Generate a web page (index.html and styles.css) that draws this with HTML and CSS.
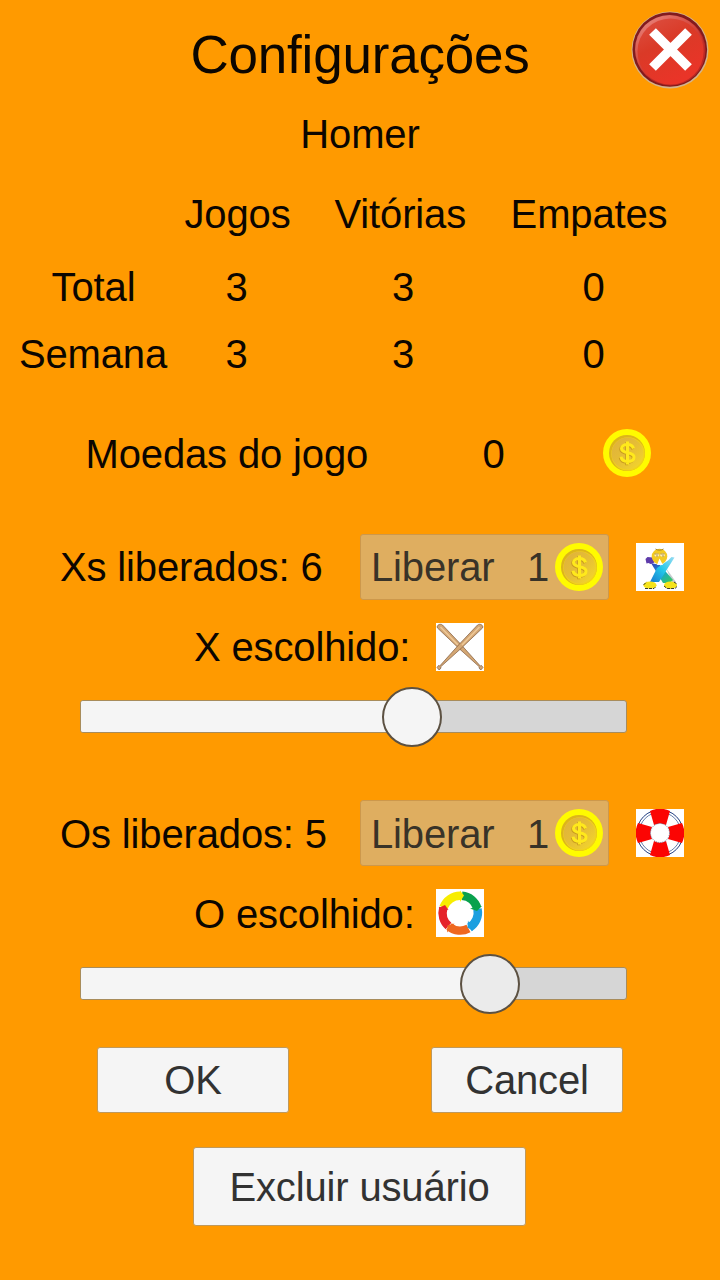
FILE: index.html
```html
<!DOCTYPE html>
<html lang="pt-BR">
<head>
<meta charset="utf-8">
<title>Configurações</title>
<link rel="stylesheet" href="styles.css">
</head>
<body>
<svg class="defs" aria-hidden="true">
  <defs>
    <linearGradient id="face" x1="0" y1="0" x2="1" y2="1"><stop offset="0" stop-color="#deb03c"/><stop offset=".5" stop-color="#e6be35"/><stop offset="1" stop-color="#f5d92a"/></linearGradient>
    <symbol id="coin" viewBox="0 0 48 48">
      <circle cx="24" cy="24" r="24" fill="#fffb00"/>
      <circle cx="24" cy="24" r="18" fill="#dcb41c"/>
      <circle cx="25" cy="25" r="16.800" fill="#f2d21a"/>
      <circle cx="24.5" cy="24.500" r="16" fill="url(#face)"/>
      <g fill="none" stroke-width="3">
        <path d="M30.500 19.500c-.8-2.700-3-4-6-4s-6 1.300-6 4c0 5.800 12.500 2.700 12.500 8.500 0 3-2.800 4.500-6.500 4.500s-6-1.600-6.500-4.700M24.500 12.500v23" stroke="#c99c20" transform="translate(-.8 .8)"/>
        <path d="M30.500 19.500c-.8-2.700-3-4-6-4s-6 1.300-6 4c0 5.800 12.500 2.700 12.500 8.500 0 3-2.800 4.500-6.500 4.500s-6-1.600-6.500-4.700M24.500 12.500v23" stroke="#ffe91c"/>
      </g>
    </symbol>
  </defs>
</svg>
<main class="screen">
  <header class="title-row">
    <h1 class="title">Configurações</h1>
    <button class="close" aria-label="Fechar">
      <svg viewBox="0 0 78 78" width="78" height="78">
        <defs>
          <linearGradient id="red" x1="0" y1="0" x2=".5" y2="1"><stop offset="0" stop-color="#dc5143"/><stop offset=".45" stop-color="#da3a27"/><stop offset="1" stop-color="#ea3428"/></linearGradient>
          <linearGradient id="shine" x1="0" y1="0" x2=".7" y2="1"><stop offset="0" stop-color="#f19b92"/><stop offset=".6" stop-color="#e35345" stop-opacity=".5"/><stop offset="1" stop-color="#e2382b" stop-opacity="0"/></linearGradient>
        </defs>
        <circle cx="39" cy="39" r="38.500" fill="#d3b48c"/>
        <circle cx="38.800" cy="38.500" r="37.300" fill="#821a1d"/>
        <circle cx="39.500" cy="39.500" r="35" fill="#bd2823"/>
        <circle cx="38.500" cy="38.500" r="34.500" fill="url(#shine)"/>
        <circle cx="39.500" cy="40.500" r="33" fill="url(#red)"/>
        <path d="M21.500 20.500l36 36M57.500 20.500L21.500 56.500" stroke="#fff" stroke-width="9.500"/>
      </svg>
    </button>
  </header>
  <div class="player">Homer</div>

  <section class="stats">
    <div class="stats-head"><span>Jogos</span><span>Vitórias</span><span>Empates</span></div>
    <div class="stats-row"><span>Total</span><span>3</span><span>3</span><span>0</span></div>
    <div class="stats-row"><span>Semana</span><span>3</span><span>3</span><span>0</span></div>
  </section>

  <div class="coins">
    <span class="coins-label">Moedas do jogo</span>
    <span class="coins-value">0</span>
    <svg class="icon"><use href="#coin"/></svg>
  </div>

  <section class="piece">
    <div class="unlock-row">
      <span class="unlocked">Xs liberados: 6</span>
      <button class="unlock" disabled><span>Liberar</span><span class="price">1</span><svg class="icon"><use href="#coin"/></svg></button>
      <svg class="icon" viewBox="0 0 48 48">
        <defs>
          <linearGradient id="body" x1="1" y1="0" x2="0" y2="1"><stop offset="0" stop-color="#9bdcf2"/><stop offset=".5" stop-color="#22c8ea"/><stop offset="1" stop-color="#1779cf"/></linearGradient>
          <linearGradient id="leg" x1="0" y1="0" x2="1" y2="1"><stop offset="0" stop-color="#3835b5"/><stop offset=".45" stop-color="#12a2dc"/><stop offset="1" stop-color="#3cce4b"/></linearGradient>
        </defs>
        <path fill="#fff" d="M0 0h48v48H0z"/>
        <path d="M37 41l3-2-10-14z" fill="#c4cbce"/>
        <path d="M9.500 16l2-2 5 .5 2 5-4 1.500-2-1-2 .5z" fill="#5e3baa"/>
        <path d="M15 20l9 2 13 15-3 3h-7z" fill="url(#leg)"/>
        <path d="M32 17.500l3.500-3.500 3 .5L23 39h-9l7-14z" fill="url(#body)"/>
        <circle cx="23.500" cy="13.500" r="7.800" fill="#f3ca22"/>
        <path d="M19.500 6c2 1.500 6 1.500 8 0" stroke="#a5862a" fill="none"/>
        <ellipse cx="20.800" cy="12" rx="2.500" ry="1.800" fill="#fff0b4"/>
        <ellipse cx="26.500" cy="12" rx="2.500" ry="1.800" fill="#fff0b4"/>
        <path d="M18.500 11h4M24.500 11h4M20 13h2M26 13h2" stroke="#8a6c22" stroke-width=".7"/>
        <path d="M21 22l2.500-6.500L27 22z" fill="#fff"/>
        <ellipse cx="14" cy="42.200" rx="6.500" ry="3.700" fill="#f5e31b"/>
        <ellipse cx="34.500" cy="42.200" rx="6.500" ry="3.700" fill="#f5e31b"/>
        <path d="M7.500 42l3-3M9 45.500h9l2-2M28 43l3 2.500h8l2-2M38 39l3 2" fill="none" stroke="#292817" stroke-width=".9" stroke-dasharray="3 1"/>
      </svg>
    </div>
    <div class="chosen">
      <span class="chosen-label">X escolhido:</span>
      <svg class="icon" viewBox="0 0 48 48">
        <defs>
          <g id="bat">
            <path d="M1.500 5C0 2.500 4 0 6.500 2L25 21.500 44.300 43l1.200-.5 1.500 2-2.200 2.500-1.800-2 .3-1.200L22.500 25z" fill="#d3a673" stroke="#805a3c" stroke-width=".7"/>
            <path d="M4.500 4L22 22" fill="none" stroke="#efc998" stroke-width="1.600"/>
          </g>
        </defs>
        <path fill="#fff" d="M0 0h48v48H0z"/>
        <use href="#bat"/>
        <use href="#bat" transform="translate(48 0) scale(-1 1)"/>
      </svg>
    </div>
    <div class="slider"><div class="fill" style="width:331px"></div><div class="thumb"></div></div>
  </section>

  <section class="piece">
    <div class="unlock-row">
      <span class="unlocked">Os liberados: 5</span>
      <button class="unlock" disabled><span>Liberar</span><span class="price">1</span><svg class="icon"><use href="#coin"/></svg></button>
      <svg class="icon" viewBox="0 0 48 48">
        <path fill="#fff" d="M0 0h48v48H0z"/>
        <circle cx="24" cy="24" r="23.200" fill="none" stroke="#1f3c80" stroke-width="1"/>
        <circle cx="24" cy="24" r="20.800" fill="none" stroke="#3c5994" stroke-width=".8"/>
        <path d="M14 2c6-3 14-3 20 0l-4 14c-4-2-8-2-12 0zM46 14c3 6 3 14 0 20l-14-4c2-4 2-8 0-12zM34 46c-6 3-14 3-20 0l4-14c4 2 8 2 12 0zM2 34c-3-6-3-14 0-20l14 4c-2 4-2 8 0 12z" fill="#fb0503"/>
        <circle cx="24" cy="24" r="9.500" fill="#fff" stroke="#53658c" stroke-width=".8" stroke-dasharray="1 1"/>
      </svg>
    </div>
    <div class="chosen">
      <span class="chosen-label">O escolhido:</span>
      <svg class="icon" viewBox="0 0 48 48">
        <path fill="#fff" d="M0 0h48v48H0z"/>
        <g fill="none" stroke-width="8.500">
          <path d="M26 6.800A17.500 17.500 0 0 1 41.200 19" stroke="#09a14d"/>
          <path d="M41.500 20A17.500 17.500 0 0 1 33.500 38.500" stroke="#1b9fe0"/>
          <path d="M32.500 39.500A17.500 17.500 0 0 1 13 37.500" stroke="#ef6820"/>
          <path d="M12.500 37A17.500 17.500 0 0 1 7.300 19" stroke="#e5232a"/>
          <path d="M7.500 18.500A17.500 17.500 0 0 1 24.500 6.800" stroke="#f8ed00"/>
        </g>
        <path d="M24 1.500l4 5-4 6.500z" fill="#f8ed00"/>
        <path d="M46 17l-5 5-7-2.500z" fill="#09a14d"/>
        <path d="M37 42l-5.500-3.500.5-7z" fill="#1b9fe0"/>
        <path d="M11 43.500l.5-7 7-2z" fill="#ef6820"/>
        <path d="M2.500 19l6.500-3 3.500 5z" fill="#e5232a"/>
      </svg>
    </div>
    <div class="slider"><div class="fill" style="width:409px"></div><div class="thumb thumb-active"></div></div>
  </section>

  <div class="actions">
    <button class="btn">OK</button>
    <button class="btn">Cancel</button>
  </div>
  <button class="btn btn-delete">Excluir usuário</button>
</main>
</body>
</html>
```
FILE: styles.css
```css
* { box-sizing: border-box; }
body { margin: 0; background: #ff9a00; }
.defs { position: absolute; width: 0; height: 0; }
.screen {
  width: 720px;
  height: 1280px;
  overflow: hidden;
  display: flex;
  flex-direction: column;
  font: 40px/1 "Liberation Sans", Arial, sans-serif;
  letter-spacing: -.14px;
  color: #0c0600;
}
button { margin: 0; padding: 0; border: 0; background: none; font: inherit; letter-spacing: inherit; }
.icon { display: block; flex: none; width: 48px; height: 48px; }
.title-row {
  height: 108px;
  flex: none;
  display: grid;
  grid-template-columns: 89px 1fr 89px;
  align-items: center;
}
.title { grid-column: 2; margin: 0; padding-top: 1px; font-size: 53px; font-weight: 400; text-align: center; white-space: nowrap; letter-spacing: -.2px; }
.close { grid-column: 3; align-self: start; width: 78px; height: 78px; margin-top: 11px; }
.close svg { display: block; }
.player { height: 52px; flex: none; line-height: 52px; text-align: center; }
.stats { margin-top: 21px; flex: none; }
.stats-head { display: flex; padding-left: 184.500px; height: 73px; line-height: 67px; }
.stats-head span:nth-child(2) { margin: 0 44.500px 0 44px; }
.stats-row {
  display: grid;
  grid-template-columns: 187px 99px 234px 147px;
  height: 66px;
  line-height: 66px;
  text-align: center;
}
.stats-row + .stats-row { height: 67px; line-height: 68px; }
.stats-row + .stats-row span:first-child { margin-left: -1px; }
.coins { display: flex; align-items: center; height: 48px; flex: none; margin: 42px 0 0 85.500px; }
.coins-label { width: 397px; padding-top: 2px; }
.coins-value { width: 120.500px; padding-top: 2px; }
.unlock-row { display: flex; align-items: center; height: 66px; padding-left: 60px; }
.piece { flex: none; margin-top: 57px; }
.piece + .piece { margin-top: 53px; }
.unlocked { width: 300px; white-space: nowrap; }
.piece + .piece span { padding-top: 2px; }
.unlock {
  display: flex;
  align-items: center;
  width: 249px;
  height: 66px;
  margin-right: 27px;
  padding-left: 10px;
  border: 1px solid #cd984b;
  border-radius: 3px;
  background: #dfae60;
  color: #393328;
}
.price { margin: 0 6px 0 auto; }
.unlock .icon { margin-right: 5px; }
.chosen { display: flex; align-items: center; height: 48px; margin: 23px 0 0 194px; }
.chosen-label { width: 242px; }
.slider {
  display: flex;
  align-items: center;
  width: 547px;
  height: 33px;
  margin: 29px 0 14px 80px;
  border: 1px solid #a88c5b;
  border-radius: 3px;
  background: #d6d6d6;
}
.piece + .piece .slider { margin-top: 30px; }
.fill { height: 100%; border-radius: 2px 0 0 2px; background: #f5f5f5; }
.thumb { flex: none; width: 60px; height: 60px; margin-left: -30px; border: 2px solid #5c5142; border-radius: 50%; background: #f5f5f5; }
.thumb-active { background: #ebebeb; }
.actions { display: flex; gap: 142px; margin: 33px 0 0 97px; }
.btn { width: 192px; height: 66px; border: 1px solid #bf995c; border-radius: 3px; background: #f5f5f5; color: #323232; }
.btn-delete { width: 333px; height: 79px; margin: 34px 0 0 193px; flex: none; }
```
